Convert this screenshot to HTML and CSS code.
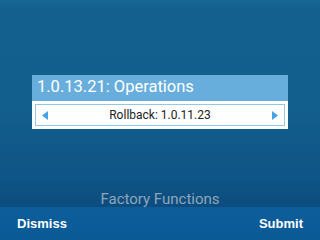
FILE: index.html
```html
<!DOCTYPE html>
<html lang="en">
<head>
    <meta charset="UTF-8">
    <meta name="viewport" content="width=device-width, initial-scale=1.0">
    <title>Factory Functions</title>
    <link rel="stylesheet" href="styles.css">
</head>
<body>
    <div class="screen">
        <div class="dialog">
            <div class="dialog-title">1.0.13.21: Operations</div>
            <div class="dialog-body">
                <div class="picker">
                    <svg class="arrow" width="6" height="9" viewBox="0 0 6 9"><polygon points="6,0 0,4.5 6,9" /></svg>
                    <span class="picker-value">Rollback: 1.0.11.23</span>
                    <svg class="arrow" width="6" height="9" viewBox="0 0 6 9"><polygon points="0,0 6,4.5 0,9" /></svg>
                </div>
            </div>
        </div>

        <div class="spacer"></div>

        <div class="screen-title">Factory Functions</div>

        <div class="softkeys">
            <span class="softkey">Dismiss</span>
            <span class="softkey">Submit</span>
        </div>
    </div>
</body>
</html>
```

FILE: styles.css
```css
* {
    margin: 0;
    padding: 0;
    box-sizing: border-box;
}

body {
    width: 320px;
    height: 240px;
    overflow: hidden;
    font-family: Roboto, 'Noto Sans', sans-serif;
}

.screen {
    display: flex;
    flex-direction: column;
    height: 240px;
    background: linear-gradient(180deg, #186895 0%, #13608f 4%, #125e8d 45%, #0f5486 75%, #0c4c7e 86%);
}

/* Dialog */
.dialog {
    margin: 75px 32px 0;
}

.dialog-title {
    height: 26px;
    padding: 0 5px;
    background: #68aedc;
    color: #fff;
    font-size: 16.5px;
    line-height: 23px;
    white-space: nowrap;
}

.dialog-body {
    background: #fff;
    padding: 3px;
}

.picker {
    display: flex;
    align-items: center;
    justify-content: space-between;
    height: 22px;
    padding: 0 6px;
    border: 1px solid #93c6e8;
}

.arrow {
    fill: #4aa2e6;
}

.picker-value {
    color: #222;
    font-size: 12px;
}

.spacer {
    flex: 1;
}

.screen-title {
    text-align: center;
    color: #8ea6ba;
    font-size: 15px;
    line-height: 15px;
}

/* Soft keys */
.softkeys {
    display: flex;
    justify-content: space-between;
    align-items: center;
    height: 33px;
    padding: 0 17px;
    background: linear-gradient(180deg, #0c5d9a 0%, #0a5a96 100%);
}

.softkey {
    color: #fff;
    font-family: 'Liberation Sans', Arial, sans-serif;
    font-weight: bold;
    font-size: 13px;
}
```
